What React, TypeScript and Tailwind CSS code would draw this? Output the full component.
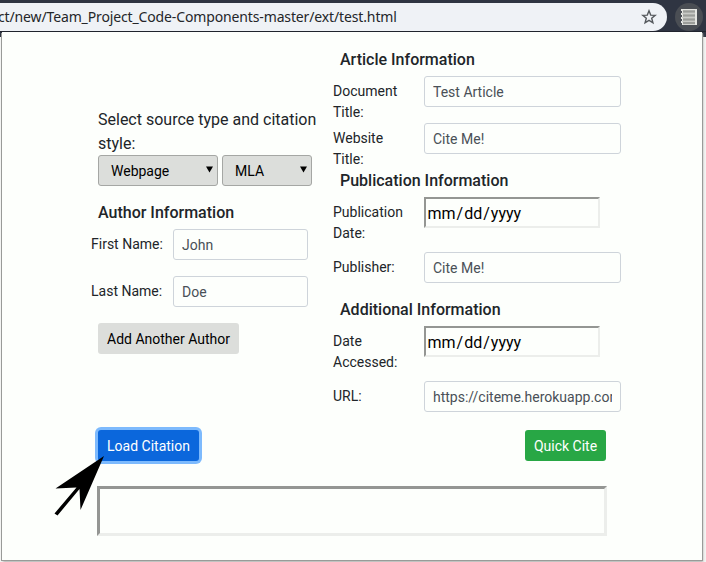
import type { ReactNode } from "react";

function Field({ label, children, className = "", wide = false }: { label: string; children: ReactNode; className?: string; wide?: boolean }) {
  return (
    <div className={`flex items-start ${className}`}>
      <div className={`${wide ? "w-[91px] pr-4" : "w-[82px] whitespace-nowrap"} shrink-0 pt-[5px] text-sm leading-[21px]`}>{label}</div>
      {children}
    </div>
  );
}

function TextBox({ value, className }: { value: string; className: string }) {
  return (
    <div className={`h-[31px] shrink-0 rounded-[3px] border border-[#ced4da] bg-[#fdfffc] px-2 pt-[5px] text-sm leading-[21px] text-[#495057] ${className}`}>
      <div className="overflow-hidden whitespace-nowrap">{value}</div>
    </div>
  );
}

function DateBox() {
  return (
    <div className="h-[31px] w-[176px] shrink-0 border-2 border-t-[#949693] border-l-[#949693] border-r-[#eceeeb] border-b-[#eceeeb] pl-[1.5px] pt-[3px] text-base leading-6 text-black">
      mm<span className="px-px">/</span>dd<span className="px-px">/</span>yyyy
    </div>
  );
}

function Select({ value, className }: { value: string; className: string }) {
  return (
    <div className={`flex h-[31px] items-center justify-between rounded-[3px] border border-[#a5a7a4] bg-[#dcdedb] pl-3 pr-1 text-sm text-black ${className}`}>
      <span>{value}</span>
      <svg width="7" height="7" viewBox="0 0 7 7" className="mb-[2px]"><path d="M0 0.5H7L3.5 6.5Z" /></svg>
    </div>
  );
}

function Heading({ children, className }: { children: ReactNode; className: string }) {
  return <h5 className={`text-base font-medium leading-5 ${className}`}>{children}</h5>;
}

function BrowserBar() {
  return (
    <header className="flex h-8 items-start border-b border-[#20242d] bg-[#2f3542] pt-[3px]">
      <div className="flex h-7 w-[667px] shrink-0 items-center justify-between rounded-r-full bg-[#eff2f6] pr-[10px]">
        <span className="whitespace-nowrap font-['Noto_Sans','Open_Sans',sans-serif] text-sm tracking-[-0.135px] text-[#242629]">
          <span className="-ml-[2px]">ct/new/Team_Project_Code-Components-master/ext/test.html</span>
        </span>
        <svg width="16" height="16" viewBox="0 0 16 16" fill="none" stroke="#55595d" strokeWidth="1.4">
          <path d="M8 1.8 9.7 6.1 14.2 6.4 10.7 9.3 11.9 13.8 8 11.3 4.1 13.8 5.3 9.3 1.8 6.4 6.3 6.1Z" />
        </svg>
      </div>
      <svg width="28" height="28" viewBox="0 0 28 28" className="ml-2">
        <circle cx="14" cy="14" r="14" fill="#4a4e54" />
        <path d="M6 6H22V22H7V20H6V18H7V16H6V14H7V12H6V10H7V8H6Z" fill="#e5e6e2" />
        <path d="M8 8.5H20M8 12.5H20M8 16.5H20M8 20H20" stroke="#9b9d99" strokeWidth="2.4" />
        <path d="M7 10.5H20M7 14.5H20M7 18.5H20" stroke="#c9cac6" />
      </svg>
    </header>
  );
}

export default function App() {
  return (
    <div className="relative h-[562px] w-[706px] overflow-hidden bg-[#f3f4f2] font-['Roboto',sans-serif] text-[#212529]">
      <BrowserBar />
      <div className="h-[5px] bg-[#2f3542]" />
      <main className="relative -mt-[5px] ml-[2px] h-[528px] w-[700px] bg-[#fdfffc] shadow-[1px_1px_0_#999b98,-1px_1px_0_#999b98,1px_2px_2px_#aaacaa]">
        <div className="flex h-[398px] pl-[89px]">
          <section className="w-[242px] shrink-0 pt-[76px]">
            <p className="-mb-px ml-[7px] w-[230px] text-base leading-6">Select source type and citation style:</p>
            <div className="ml-[7px] flex gap-1">
              <Select value="Webpage" className="w-[120px]" />
              <Select value="MLA" className="w-[90px]" />
            </div>
            <Heading className="ml-[7px] mt-[17px] mb-[6px]">Author Information</Heading>
            <Field label="First Name:"><TextBox value="John" className="w-[135px]" /></Field>
            <Field label="Last Name:" className="mt-4"><TextBox value="Doe" className="w-[135px]" /></Field>
            <button className="ml-[7px] mt-4 h-[31px] w-[141px] rounded-[3px] bg-[#dcdedb] text-sm text-black">Add Another Author</button>
          </section>
          <section className="w-[288px] pt-[18px]">
            <Heading className="ml-[7px] mb-[6px]">Article Information</Heading>
            <Field wide label="Document Title:" className="h-[47px]"><TextBox value="Test Article" className="w-[197px]" /></Field>
            <Field wide label="Website Title:" className="h-[48px]"><TextBox value="Cite Me!" className="w-[197px]" /></Field>
            <Heading className="ml-[7px] mb-[6px]">Publication Information</Heading>
            <Field wide label="Publication Date:" className="h-[55px]"><DateBox /></Field>
            <Field wide label="Publisher:" className="h-[48px]"><TextBox value="Cite Me!" className="w-[197px]" /></Field>
            <Heading className="ml-[7px] mb-[6px]">Additional Information</Heading>
            <Field wide label="Date Accessed:" className="h-[55px]"><DateBox /></Field>
            <Field wide label="URL:"><TextBox value="https://citeme.herokuapp.com/" className="w-[197px]" /></Field>
          </section>
        </div>
        <div className="ml-24 flex w-[508px] justify-between">
          <button className="h-[31px] w-[101px] rounded-[3px] bg-[#0b67dc] text-sm text-white shadow-[0_0_0_3px_#7dbafd]">Load Citation</button>
          <button className="h-[31px] w-[81px] rounded-[3px] bg-[#28a745] text-sm text-white">Quick Cite</button>
        </div>
        <div className="ml-[95px] mt-[25px] h-[50px] w-[510px] border-[3px] border-t-[#949693] border-l-[#949693] border-r-[#eceeeb] border-b-[#eceeeb]" />
      </main>
      <svg width="52" height="62" viewBox="0 0 52 62" className="absolute left-[53px] top-[455px]">
        <path d="M51 1 2.5 33.5 23.5 32.5 1.5 58.5 4.5 60.5 26.5 34 27.5 55Z" />
      </svg>
    </div>
  );
}
